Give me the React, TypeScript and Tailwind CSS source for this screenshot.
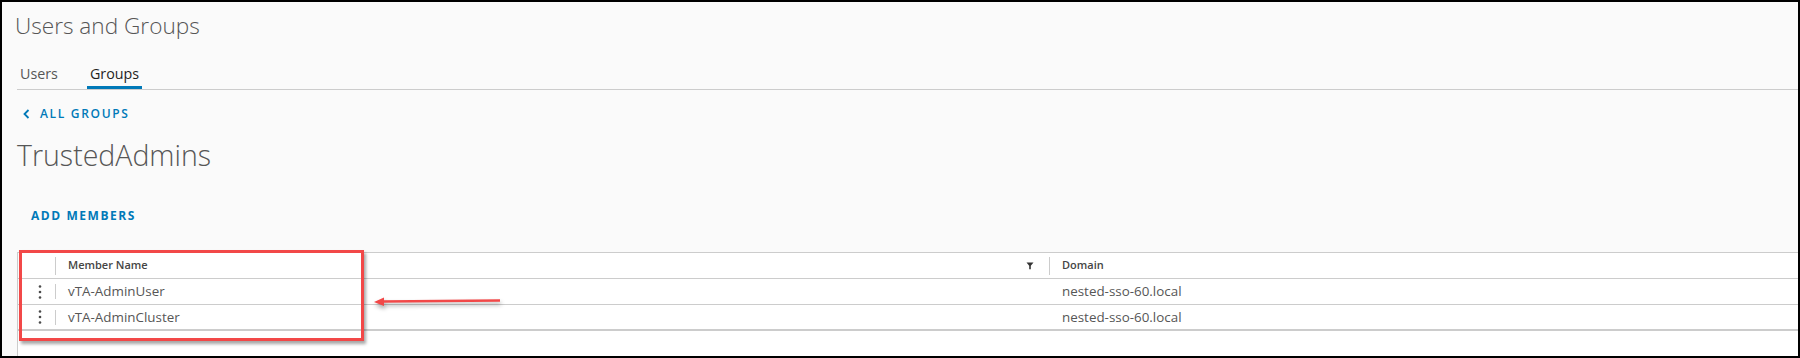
import React from "react";

function Dots() {
  return (
    <svg width="6" height="16" viewBox="0 0 6 16" className="block">
      <circle cx="3" cy="2.5" r="1.3" fill="#4a4a4a" />
      <circle cx="3" cy="8" r="1.3" fill="#4a4a4a" />
      <circle cx="3" cy="13.5" r="1.3" fill="#4a4a4a" />
    </svg>
  );
}

function Row({ name, domain, last }: { name: string; domain: string; last?: boolean }) {
  return (
    <div
      className={`flex h-[26px] items-center bg-white ${
        last ? "border-b-2" : "border-b"
      } border-[#cccccc]`}
    >
      <div className="flex h-full w-[38px] items-center">
        <div className="ml-[19px]">
          <Dots />
        </div>
        <div className="ml-auto h-[15px] w-px bg-[#cccccc]" />
      </div>
      <div className="flex h-full w-[994px] items-center pl-[12px] text-[13.4px] text-[#565656]">
        {name}
      </div>
      <div className="flex h-full flex-1 items-center pl-[12px] text-[13.4px] text-[#565656]">
        {domain}
      </div>
    </div>
  );
}

export default function App() {
  return (
    <div className="relative box-border h-[358px] w-[1800px] overflow-hidden border-2 border-black bg-[#fafafa] font-['Open_Sans',sans-serif]">
      <div className="flex flex-col">
        <div className="ml-[13px] mt-[8px] h-[31px] text-[22.6px] font-light leading-[31px] text-[#565656]">
          Users and Groups
        </div>
        <div className="ml-[15px] mt-[19px] flex gap-[26px] border-b border-[#cccccc]">
          <div className="px-[3px] pt-[4px] pb-[2px] border-b-[3px] border-transparent text-[14.3px] leading-[20px] text-[#565656]">
            Users
          </div>
          <div className="px-[3px] pt-[4px] pb-[2px] border-b-[3px] border-[#0079b8] text-[14.3px] leading-[20px] text-[#1f1f1f]">
            Groups
          </div>
        </div>
        <div className="ml-[21px] mt-[16px] flex h-[16px] items-center gap-[10px] text-[12px] font-semibold leading-[16px] tracking-[0.14em] text-[#0079b8]">
          <svg width="7" height="10" viewBox="0 0 7 10" className="block">
            <path d="M5.5 1 L1.5 5 L5.5 9" fill="none" stroke="#0079b8" strokeWidth="1.8" />
          </svg>
          <span>ALL GROUPS</span>
        </div>
        <div className="ml-[15px] mt-[15px] h-[37px] text-[28.5px] font-light leading-[37px] text-[#565656]">
          TrustedAdmins
        </div>
        <div className="ml-[29px] mt-[34px] h-[16px] text-[12px] font-bold leading-[16px] tracking-[0.13em] text-[#0079b8]">
          ADD MEMBERS
        </div>
        <div className="ml-[15px] mt-[28px] flex flex-col border-l border-t border-[#cccccc] bg-white">
          <div className="flex h-[26px] items-center border-b border-[#cccccc] bg-white">
            <div className="flex h-full w-[38px] items-center">
              <div className="ml-auto h-[18px] w-px bg-[#cccccc]" />
            </div>
            <div className="flex h-full w-[994px] items-center pl-[12px] text-[11px] font-semibold text-[#454545]">
              <span>Member Name</span>
              <svg width="8" height="8" viewBox="0 0 8 8" className="ml-auto mr-[15px] block">
                <path d="M0.5 0.5 H7.5 L4.8 3.8 V7.2 H3.2 V3.8 Z" fill="#333333" />
              </svg>
              <div className="h-[18px] w-px bg-[#cccccc]" />
            </div>
            <div className="flex h-full flex-1 items-center pl-[12px] text-[11px] font-semibold text-[#454545]">
              Domain
            </div>
          </div>
          <Row name="vTA-AdminUser" domain="nested-sso-60.local" />
          <Row name="vTA-AdminCluster" domain="nested-sso-60.local" last />
          <div className="h-[40px] bg-white" />
        </div>
      </div>

      <div className="absolute left-[17px] top-[248px] h-[91px] w-[345px] border-[3px] border-[#f24848] shadow-[2px_3px_3px_rgba(0,0,0,0.35)]" />
      <svg
        className="absolute left-[366px] top-[290px]"
        width="140"
        height="20"
        viewBox="0 0 140 20"
        style={{ filter: "drop-shadow(1px 3px 2px rgba(0,0,0,0.35))" }}
      >
        <line x1="14" y1="9.5" x2="132" y2="8.5" stroke="#f24848" strokeWidth="2.6" />
        <path d="M6 10 L16 5.5 L16 14 Z" fill="#f24848" />
      </svg>
    </div>
  );
}
